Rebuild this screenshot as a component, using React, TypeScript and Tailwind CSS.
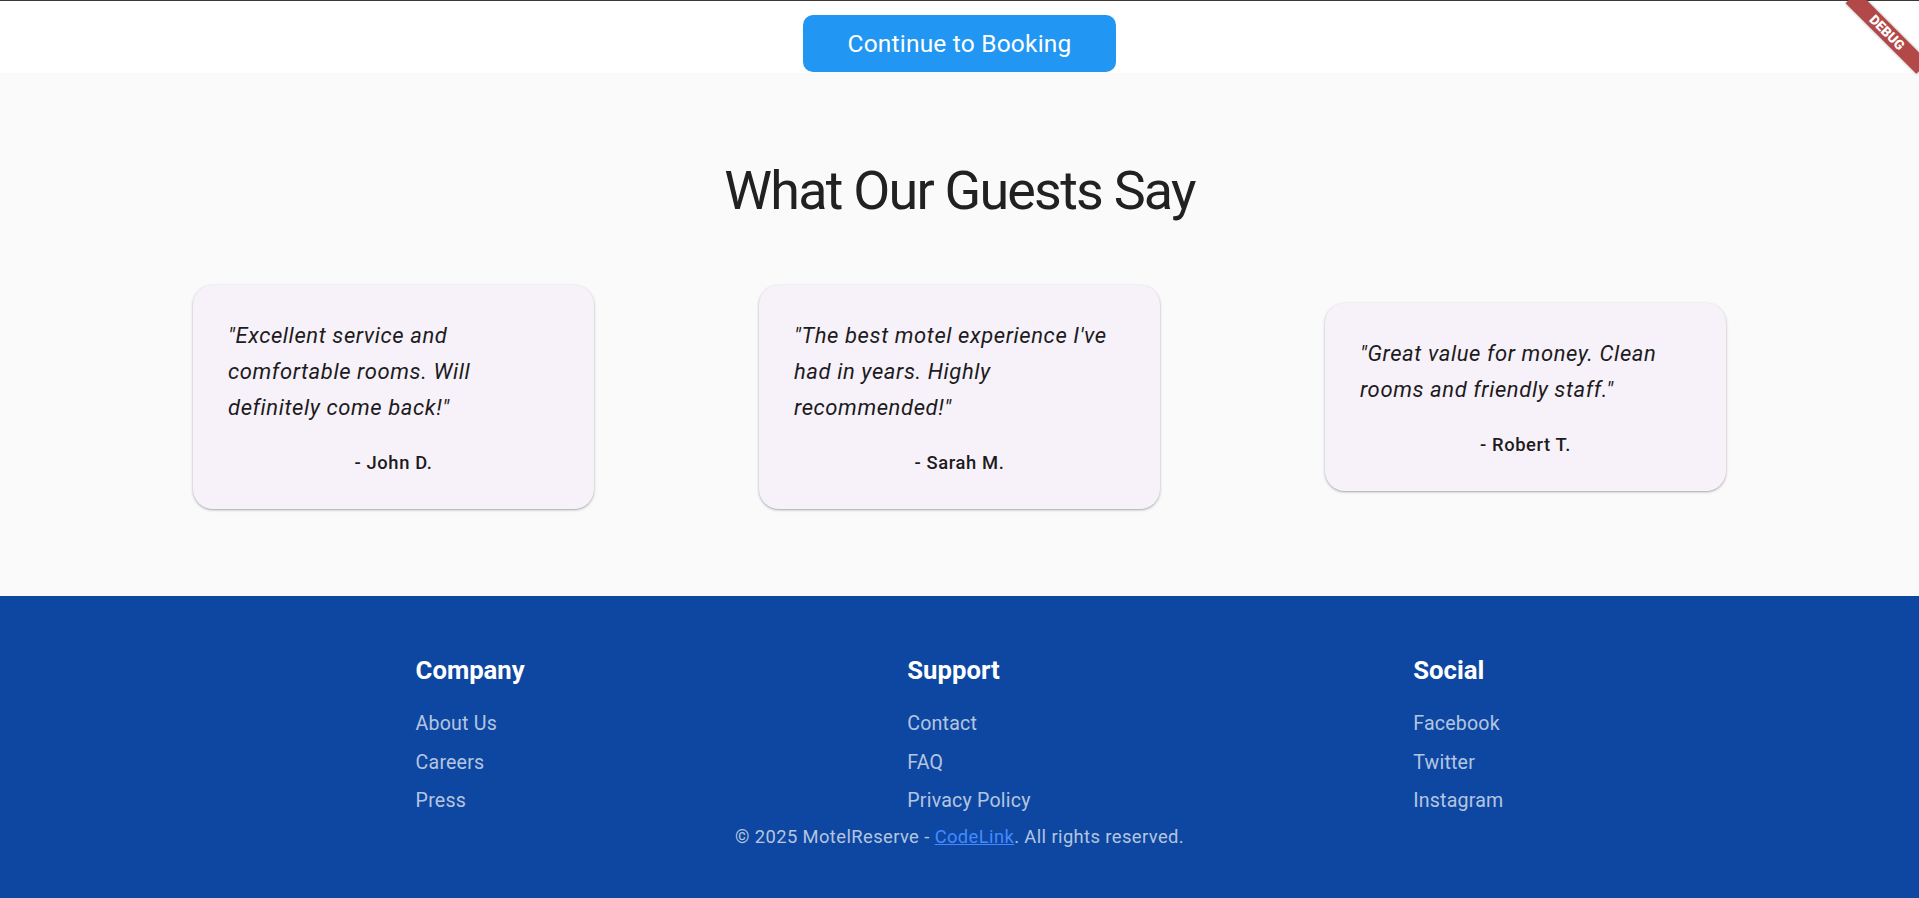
import React from 'react';

const testimonials = [
  { id: 1, quote: '"Excellent service and comfortable rooms. Will definitely come back!"', author: '- John D.' },
  { id: 2, quote: '"The best motel experience I\'ve had in years. Highly recommended!"', author: '- Sarah M.' },
  { id: 3, quote: '"Great value for money. Clean rooms and friendly staff."', author: '- Robert T.' },
];

const footerColumns = [
  { title: 'Company', links: ['About Us', 'Careers', 'Press'] },
  { title: 'Support', links: ['Contact', 'FAQ', 'Privacy Policy'] },
  { title: 'Social', links: ['Facebook', 'Twitter', 'Instagram'] },
];

function DebugBanner() {
  return (
    <div className="absolute top-0 right-0 w-[100px] h-[100px] overflow-hidden pointer-events-none">
      <div className="absolute left-[18px] top-[23.5px] w-[100px] h-[17px] rotate-45 bg-[#b34848] shadow-[0_0_3px_rgba(0,0,0,0.35)] flex items-center justify-center">
        <span className="text-white text-[13.5px] font-black leading-none">DEBUG</span>
      </div>
    </div>
  );
}

export default function App() {
  return (
    <div className="relative min-h-[898px] font-['Roboto',sans-serif] bg-[#fafafa]">
      {/* top bar with booking button */}
      <div className="h-[73px] bg-white border-t border-[#3a3a3a] flex justify-center pt-[14px]">
        <button className="w-[313px] h-[57px] rounded-[10px] bg-[#2196f3] text-white text-[24.5px] leading-[29px] tracking-[0.2px]">
          Continue to Booking
        </button>
      </div>

      {/* testimonials */}
      <section className="bg-[#fafafa] pt-[86px] pb-[87px]">
        <h2 className="text-center text-[53.85px] leading-[63px] tracking-[-1.76px] text-[#212121]">
          What Our Guests Say
        </h2>
        <div className="mt-[63px] flex justify-center items-center gap-[165px]">
          {testimonials.map((t) => (
            <div
              key={t.id}
              className="w-[401px] rounded-[20px] bg-[#f7f2fa] pt-[33.4px] pb-[35.5px] px-[35px] shadow-[0_1px_3px_rgba(0,0,0,0.28),0_1px_1px_rgba(0,0,0,0.08)]"
            >
              <p className="max-w-[322px] italic text-[22px] leading-[35.7px] tracking-[0.6px] text-[#1d1b20]">
                {t.quote}
              </p>
              <p className="mt-[26.5px] text-center text-[18.36px] leading-[21.5px] tracking-[0.6px] font-medium text-[#1d1b20]">
                {t.author}
              </p>
            </div>
          ))}
        </div>
      </section>

      {/* footer */}
      <footer className="bg-[#0d47a1] pt-[59.2px] pb-[50px]">
        <div className="flex justify-evenly px-[33px]">
          {footerColumns.map((col) => (
            <div key={col.title} className="flex flex-col">
              <h3 className="text-white text-[25.7px] leading-[30px] font-bold">{col.title}</h3>
              <ul className="mt-[27.3px] flex flex-col gap-[15.3px]">
                {col.links.map((link) => (
                  <li key={link} className="text-white/70 text-[19.58px] leading-[23px] tracking-[0.2px]">
                    {link}
                  </li>
                ))}
              </ul>
            </div>
          ))}
        </div>
        <p className="mt-[14.2px] text-center text-white/70 text-[18.36px] leading-[21.5px] tracking-[0.4px]">
          © 2025 MotelReserve - <span className="text-[#448aff] underline">CodeLink</span>. All rights reserved.
        </p>
      </footer>

      <DebugBanner />
    </div>
  );
}
